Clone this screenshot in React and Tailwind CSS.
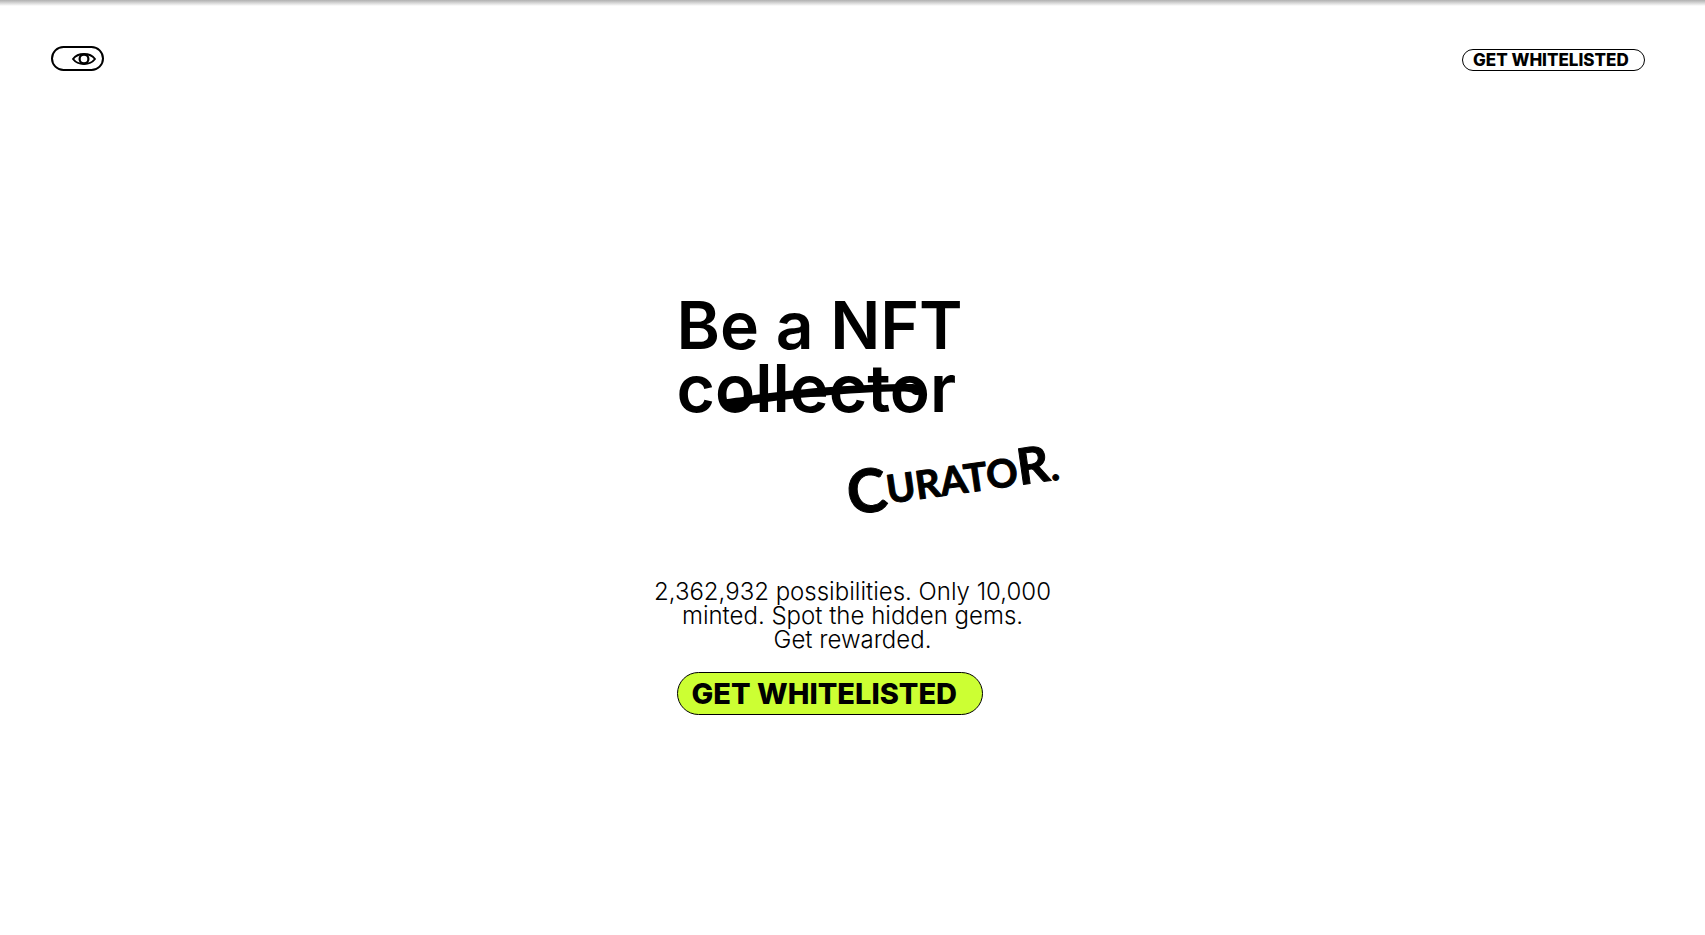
import React from "react";

function EyeIcon() {
  return (
    <svg viewBox="0 0 24 14" className="h-[14px] w-6" fill="none" stroke="black" aria-hidden="true">
      <path d="M1 7C6 .4 18 .4 23 7C18 13.6 6 13.6 1 7Z" strokeWidth="1.9" strokeLinejoin="round" />
      <circle cx="12" cy="7" r="4.4" strokeWidth="2.2" />
    </svg>
  );
}

function Header() {
  return (
    <header className="flex items-start justify-between pt-10 pr-[60px] pl-[51px]">
      <button
        type="button"
        aria-label="Toggle view"
        className="flex h-[25px] w-[53px] items-center justify-end rounded-full border-2 border-black pr-[6px]"
      >
        <EyeIcon />
      </button>
      <a
        href="#whitelist"
        className="mt-[3px] flex h-[22px] w-[183px] items-center rounded-full border border-black pl-[10px] text-[17px] leading-none font-extrabold whitespace-nowrap"
      >
        GET WHITELISTED
      </a>
    </header>
  );
}

function Headline() {
  return (
    <h1 className="pl-6 text-[66px] leading-[63px] font-semibold whitespace-nowrap">
      Be a NFT
      <br />
      <span className="relative inline-block">
        collector
        <svg
          viewBox="0 0 210 30"
          className="absolute top-[25px] left-[44px] h-[30px] w-[210px]"
          aria-hidden="true"
        >
          <path d="M1 19C4 17 12 16 22 15C45 11 80 7 110 5C140 3 165 2 188 2C198 2 205 4 204 7C203 11 196 16 191 11C187 8 150 10 110 13C75 16 45 20 30 22C22 29 5 27 1 19Z" />
        </svg>
      </span>
      <svg viewBox="0 0 230 90" className="mt-4 ml-[170px] block h-[90px] w-[230px] overflow-visible">
        <text
          x="3"
          y="79"
          transform="rotate(-8 3 79)"
          fontFamily="Lato, sans-serif"
          fontWeight="700"
          fontSize="39"
          stroke="black"
          strokeWidth="1"
          strokeLinejoin="round"
        >
          <tspan fontSize="60">C</tspan>
          <tspan dy="-6">URATO</tspan>
          <tspan fontSize="50">R</tspan>.
        </text>
      </svg>
    </h1>
  );
}

export default function App() {
  return (
    <div className="min-h-screen bg-white font-['Inter',sans-serif] text-black">
      <div className="h-[6px] bg-linear-to-b from-[#b0b0b0] to-white" />
      <Header />
      <main className="mx-auto mt-[223px] flex w-[400px] flex-col items-start">
        <Headline />
        <p className="mt-[54px] self-center text-center text-[24px] leading-6 font-light whitespace-nowrap">
          2,362,932 possibilities. Only 10,000
          <br />
          minted. Spot the hidden gems.
          <br />
          Get rewarded.
        </p>
        <a
          href="#whitelist"
          className="mt-5 ml-6 flex h-[43px] w-[306px] items-center rounded-full border border-black bg-[#ccff33] pl-[14px] text-[29px] leading-none font-extrabold whitespace-nowrap"
        >
          GET WHITELISTED
        </a>
      </main>
    </div>
  );
}
